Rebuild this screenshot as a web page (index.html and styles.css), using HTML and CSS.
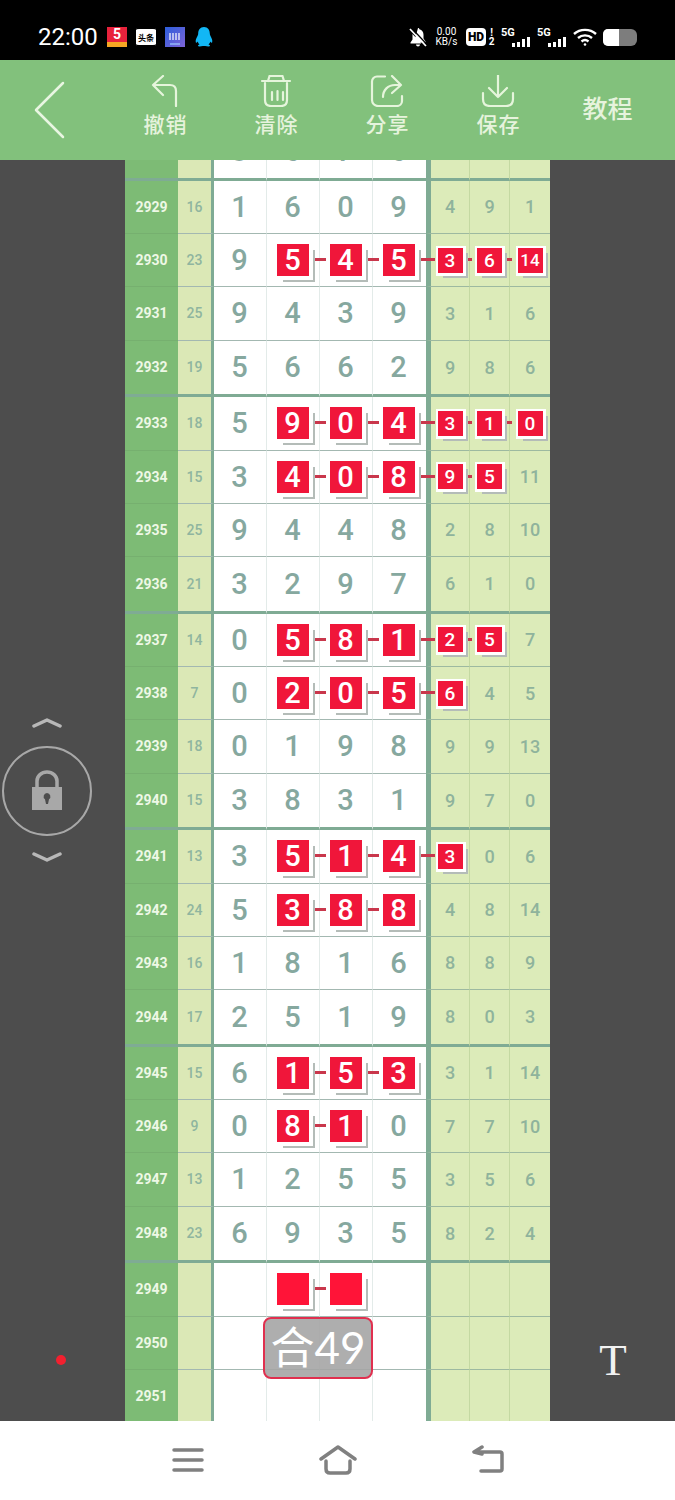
FILE: index.html
```html
<!DOCTYPE html>
<html lang="en">

<head>
    <meta charset="UTF-8">
    <meta name="viewport" content="width=device-width, initial-scale=1.0">
    <title>Number Chart</title>
    <link rel="stylesheet" href="styles.css">
</head>

<body>
    <div class="status-bar">
        <span class="time">22:00</span>
        <div class="app-icons">
            <span class="app app-red">5</span>
            <span class="app app-news">头条</span>
            <span class="app app-blue">
                <svg width="20" height="20" viewBox="0 0 20 20" fill="none" stroke="#fff" stroke-width="1.2">
                    <path d="M5 6v7M8 6v7M11 6v7M14 6v7" />
                    <path d="M5 17h10" stroke="#9fd0ff" />
                </svg>
            </span>
            <svg class="app-qq" width="18" height="20" viewBox="0 0 18 20">
                <path fill="#12b7f5" d="M9 0c4 0 5.800 3 5.800 6.500 0 1 .2 1.500.7 2.500 1.200 2.200 2.200 4.500 1.700 6.300-.3.900-1.200.3-1.900-.8-.3 1.300-1 2.200-1.800 2.900 1.200.4 1.700 1.100 1.500 1.600-.3.600-3 .5-4.800-.1-.7.100-1.700.100-2.400 0-1.800.6-4.500.7-4.800.1-.2-.5.300-1.200 1.500-1.600-.8-.7-1.500-1.600-1.800-2.900-.7 1.100-1.600 1.700-1.900.8-.5-1.800.5-4.100 1.700-6.300.5-1 .7-1.500.7-2.500C3.200 3 5 0 9 0z" />
            </svg>
        </div>
        <div class="sys-icons">
            <svg class="bell" width="20" height="20" viewBox="0 0 20 20">
                <path fill="#fff" d="M10 1c.8 0 1.300.5 1.400 1.200 2.600.6 4.100 2.800 4.100 5.500v3.800l2 3v1H6zM4.500 7l8.800 9.500H2.500v-1l2-3zM8 17.500h4c0 1-1 2-2 2s-2-1-2-2z" />
                <path stroke="#fff" stroke-width="1.800" d="M2 2l16 17" />
                <path stroke="#000" stroke-width="1.200" d="M3.500 1l16 17" />
            </svg>
            <div class="speed"><span>0.00</span><span>KB/s</span></div>
            <span class="hd">HD</span>
            <div class="sim-num"><span>!</span><span>2</span></div>
            <div class="signal"><span class="sig-label">5G</span><span class="bars"><i class="b1"></i><i class="b2"></i><i class="b3"></i><i class="b4"></i></span></div>
            <div class="signal"><span class="sig-label">5G</span><span class="bars"><i class="b1"></i><i class="b2"></i><i class="b3"></i><i class="b4"></i></span></div>
            <svg class="wifi" width="24" height="18" viewBox="0 0 24 18" fill="none" stroke="#fff" stroke-width="2.400">
                <path d="M1 6c6-5.500 16-5.500 22 0" />
                <path d="M5 10c4-3.500 10-3.500 14 0" />
                <path d="M8.500 13.500c2-1.600 5-1.600 7 0" />
                <circle cx="12" cy="16.500" r="1.300" fill="#fff" stroke="none" />
            </svg>
            <div class="battery"><span class="battery-fill"></span></div>
        </div>
    </div>

    <div class="toolbar">
        <div class="back-zone">
            <svg width="32" height="58" viewBox="0 0 32 58" fill="none" stroke="#e9f6e2" stroke-width="2.500" stroke-linecap="round" stroke-linejoin="round">
                <path d="M29 2L2 29l27 27" />
            </svg>
        </div>
        <div class="tool">
            <svg class="tool-icon" viewBox="0 0 34 32">
                <path d="M15 1L5 10l10 10M5 10h17q6 0 6 6v15" />
            </svg>
            <span>撤销</span>
        </div>
        <div class="tool">
            <svg class="tool-icon" viewBox="0 0 34 32">
                <path d="M3 6h28M9 6l1.500-5h13L25 6M6 8v17q0 6 6 6h10q6 0 6-6V8M13 17v8M18.500 16v9M24 17v8" />
            </svg>
            <span>清除</span>
        </div>
        <div class="tool">
            <svg class="tool-icon" viewBox="0 0 34 32">
                <path d="M15 1.500H7a5 5 0 0 0-5 5V25a6 6 0 0 0 6 6h19a5 5 0 0 0 5-5v-5M13 22c0-7 5-12 12-12h6M22 1l9 9-9 8" />
            </svg>
            <span>分享</span>
        </div>
        <div class="tool">
            <svg class="tool-icon" viewBox="0 0 34 32">
                <path d="M17 0v22M8 13l9 9 9-9M2 18v6q0 7 7 7h16q7 0 7-7v-6" />
            </svg>
            <span>保存</span>
        </div>
        <div class="tool tool-text">教程</div>
    </div>

    <div class="main">
        <div class="side-left">
            <svg class="chevron" width="32" height="12" viewBox="0 0 32 12" fill="none">
                <path d="M3 10l13-6 13 6" />
            </svg>
            <div class="lock-circle">
                <svg width="30" height="40" viewBox="0 0 30 40">
                    <path fill="none" stroke="#a8a8a8" stroke-width="3.500" d="M5 18V11a10 9 0 0 1 20 0v7" />
                    <path fill="#a8a8a8" fill-rule="evenodd" d="M0 17h30v23H0zM15 23a3.500 3.500 0 0 0-2 6.300L14 34h2l1-4.700A3.500 3.500 0 0 0 15 23z" />
                </svg>
            </div>
            <svg class="chevron chevron-down" width="32" height="12" viewBox="0 0 32 12" fill="none">
                <path d="M3 2l13 6 13-6" />
            </svg>
            <span class="red-dot"></span>
        </div>

        <div class="chart">
            <div class="chart-inner" id="chart"></div>
        </div>

        <div class="side-right">
            <span class="text-tool">T</span>
        </div>
    </div>

    <div class="nav-bar">
        <svg width="34" height="28" viewBox="0 0 34 28">
            <path d="M3 4h28M3 14h28M3 24h28" />
        </svg>
        <svg width="40" height="30" viewBox="0 0 40 30">
            <path d="M3 14L20 2l17 12M8 16v8q0 4 4 4h16q4 0 4-4v-8" />
        </svg>
        <svg width="34" height="30" viewBox="0 0 34 30">
            <path d="M3 7h26q2 0 2 2v15q0 2-2 2H10M11 2L3 7l8 2" />
        </svg>
    </div>

    <script src="script.js"></script>
</body>

</html>
```

FILE: styles.css
```css
* {
    box-sizing: border-box;
}

html,
body {
    margin: 0;
    padding: 0;
}

body {
    width: 675px;
    height: 1500px;
    overflow: hidden;
    font-family: 'Roboto', 'Noto Sans CJK SC', sans-serif;
    background: #4d4d4d;
}

/* status bar */
.status-bar {
    height: 60px;
    background: #000;
    color: #fff;
    display: flex;
    align-items: center;
    padding: 14px 38px 0 38px;
}

.time {
    font-size: 24px;
    width: 69px;
}

.app-icons {
    display: flex;
    align-items: center;
    gap: 9px;
}

.app {
    width: 20px;
    height: 20px;
    display: flex;
    align-items: center;
    justify-content: center;
    overflow: hidden;
}

.app-red {
    background: linear-gradient(to bottom, #e8223c 75%, #f5a623 75%);
    font-size: 14px;
    font-weight: 700;
    line-height: 14px;
    align-items: flex-start;
}

.app-news {
    background: #fff;
    color: #000;
    font-size: 8px;
    font-weight: 700;
    border-radius: 3px;
    white-space: nowrap;
    border-top: 2px solid #000;
    border-bottom: 2px solid #000;
}

.app-blue {
    background: linear-gradient(135deg, #2d5fdc, #7e63d6);
}

.app-qq {
    margin-left: 1px;
}

.sys-icons {
    margin-left: auto;
    display: flex;
    align-items: center;
}

.bell {
    margin-right: 6px;
}

.speed {
    width: 25px;
    display: flex;
    flex-direction: column;
    align-items: center;
    font-size: 10px;
    line-height: 10px;
}

.hd {
    margin-left: 7px;
    width: 20px;
    height: 18px;
    background: #fff;
    color: #000;
    border-radius: 4px;
    font-size: 12px;
    font-weight: 900;
    text-align: center;
    line-height: 18px;
}

.sim-num {
    width: 9px;
    margin-left: 1px;
    display: flex;
    flex-direction: column;
    align-items: center;
    font-size: 10px;
    font-weight: 700;
    line-height: 9px;
}

.signal {
    width: 29px;
    height: 20px;
    margin-left: 5px;
    position: relative;
}

.signal + .signal {
    margin-left: 7px;
}

.sig-label {
    font-size: 11px;
    font-weight: 700;
    line-height: 11px;
    display: block;
}

.bars {
    position: absolute;
    right: 0;
    bottom: 0;
    display: flex;
    align-items: flex-end;
    gap: 2px;
}

.bars i {
    display: block;
    width: 3px;
    background: #fff;
}

.bars .b1 {
    height: 4px;
}

.bars .b2 {
    height: 5px;
}

.bars .b3 {
    height: 8px;
}

.bars .b4 {
    height: 10px;
}

.wifi {
    margin-left: 7px;
}

.battery {
    width: 34px;
    height: 17px;
    margin-left: 6px;
    background: #7d7d7d;
    border-radius: 5px 6px 6px 5px;
    overflow: hidden;
}

.battery-fill {
    display: block;
    width: 16px;
    height: 17px;
    background: #fff;
}

/* toolbar */
.toolbar {
    height: 100px;
    background: #82c17c;
    color: #e6f3dd;
    display: flex;
    align-items: center;
    padding-right: 10px;
}

.back-zone {
    width: 110px;
    padding-left: 34px;
    display: flex;
    align-items: center;
}

.tool {
    width: 111px;
    height: 100px;
    padding-top: 15px;
    display: flex;
    flex-direction: column;
    align-items: center;
    font-size: 21px;
    font-weight: 500;
    letter-spacing: 1px;
    line-height: 28px;
}

.tool-icon {
    width: 34px;
    height: 32px;
    margin-bottom: 4px;
    margin-left: -2px;
    fill: none;
    stroke: #e6f5dc;
    stroke-width: 2.200;
    stroke-linecap: round;
    stroke-linejoin: round;
}

.tool-text {
    padding-top: 0;
    padding-right: 4px;
    justify-content: center;
    font-size: 25px;
    letter-spacing: 0;
    line-height: 88px;
}

/* main area */
.main {
    height: 1261px;
    display: flex;
    background: #4d4d4d;
}

.side-left {
    width: 125px;
    padding-top: 556px;
    display: flex;
    flex-direction: column;
}

.chevron {
    margin-left: 31px;
}

.chevron path {
    stroke: #b8b8b8;
    stroke-width: 3.500;
    stroke-linecap: round;
    stroke-linejoin: round;
}

.chevron-down {
    margin-top: 16px;
}

.lock-circle {
    width: 90px;
    height: 90px;
    margin: 18px 0 0 2px;
    padding-bottom: 2px;
    border: 2px solid #a8a8a8;
    border-radius: 50%;
    display: flex;
    align-items: center;
    justify-content: center;
}

.red-dot {
    width: 10px;
    height: 10px;
    margin: 491px 0 0 56px;
    background: #f2202f;
    border-radius: 50%;
}

.side-right {
    width: 125px;
    padding-top: 1177px;
    display: flex;
    justify-content: center;
}

.text-tool {
    font-family: 'Liberation Serif', serif;
    font-size: 45px;
    line-height: 46px;
    color: #f2f2f2;
    margin-left: 1px;
}

/* chart */
.chart {
    width: 425px;
    height: 1261px;
    overflow: hidden;
}

.chart-inner {
    margin-top: -36px;
}

.row {
    height: 53.25px;
    display: grid;
    grid-template-columns: 53px 36px 53px 53px 53px 53px 44px 40px 40px;
    position: relative;
}

.row-end {
    height: 56.75px;
}

.cell {
    position: relative;
    display: flex;
    align-items: center;
    justify-content: center;
    border-bottom: 1px solid #a3b8b1;
}

.row-end .cell {
    border-bottom: 3px solid #7fab94;
}

.issue {
    background: #7dbb75;
    color: #eef8e6;
    font-size: 14px;
    font-weight: 700;
    border-bottom-color: #76b06f;
}

.sum {
    background: #dbe8b6;
    color: #8fb59f;
    font-size: 14px;
    font-weight: 500;
    border-right: 3px solid #7fab94;
}

.num {
    background: #fff;
    color: #86a89f;
    font-size: 29px;
    font-weight: 500;
    padding-right: 1px;
    border-right: 1px solid #e3ebe9;
}

.num-last {
    border-right: none;
    padding-right: 2px;
}

.extra {
    background: #dcebb9;
    color: #8fb39c;
    font-size: 18px;
    font-weight: 500;
    border-right: 1px solid #c4d9a2;
    border-bottom-color: #9db9a0;
}

.extra-first {
    border-left: 5px solid #7fab94;
}

.extra-last {
    border-right: none;
}

.hit {
    width: 32px;
    height: 32px;
    background: #f0163a;
    color: #fff;
    font-size: 29px;
    font-weight: 500;
    display: flex;
    align-items: center;
    justify-content: center;
    box-shadow: 4px 4px 0 #fff, 6px 6px 0 #b4bcb8;
    z-index: 2;
}

.extra .hit {
    width: 25px;
    height: 25px;
    font-size: 19px;
    box-shadow: 3px 3px 0 #fff, -2px -2px 0 #fff, 3px -2px 0 #fff, -2px 3px 0 #fff, 5px 5px 0 #b4bcb8;
}

.extra .hit.small-num {
    font-size: 17px;
}

.hit-blank {
    background: #ff1438;
}

.link::after {
    content: '';
    position: absolute;
    right: -7px;
    top: 50%;
    width: 13px;
    height: 3px;
    margin-top: -2px;
    background: #c9374c;
    z-index: 1;
}

.link-cross::after {
    right: -9px;
    width: 16px;
}

.link-small::after {
    right: -3px;
    width: 6px;
}

.total-tag {
    position: absolute;
    left: 138px;
    top: 0;
    width: 110px;
    height: 62px;
    background: rgba(165, 165, 165, 0.9);
    border: 2px solid #e0304f;
    border-radius: 8px;
    color: #fff;
    font-family: 'Lato', 'Noto Sans CJK SC', sans-serif;
    font-size: 44px;
    font-weight: 400;
    line-height: 56px;
    text-align: center;
    white-space: nowrap;
    z-index: 3;
}

/* bottom nav */
.nav-bar {
    height: 79px;
    background: #fff;
    display: flex;
    align-items: center;
    justify-content: center;
    gap: 113px;
    padding-bottom: 1px;
}

.nav-bar svg {
    fill: none;
    stroke: #808080;
    stroke-width: 3.500;
    stroke-linecap: round;
    stroke-linejoin: round;
}
```

FILE: script.js
```js
// rows: issue, sum, numbers ("*" marks a highlighted number, "_" an empty cell)
const rows = [
    ['', '', '3 6 7 6 _ _ _'],
    ['2929', '16', '1 6 0 9 4 9 1'],
    ['2930', '23', '9 *5 *4 *5 *3 *6 *14'],
    ['2931', '25', '9 4 3 9 3 1 6'],
    ['2932', '19', '5 6 6 2 9 8 6'],
    ['2933', '18', '5 *9 *0 *4 *3 *1 *0'],
    ['2934', '15', '3 *4 *0 *8 *9 *5 11'],
    ['2935', '25', '9 4 4 8 2 8 10'],
    ['2936', '21', '3 2 9 7 6 1 0'],
    ['2937', '14', '0 *5 *8 *1 *2 *5 7'],
    ['2938', '7', '0 *2 *0 *5 *6 4 5'],
    ['2939', '18', '0 1 9 8 9 9 13'],
    ['2940', '15', '3 8 3 1 9 7 0'],
    ['2941', '13', '3 *5 *1 *4 *3 0 6'],
    ['2942', '24', '5 *3 *8 *8 4 8 14'],
    ['2943', '16', '1 8 1 6 8 8 9'],
    ['2944', '17', '2 5 1 9 8 0 3'],
    ['2945', '15', '6 *1 *5 *3 3 1 14'],
    ['2946', '9', '0 *8 *1 0 7 7 10'],
    ['2947', '13', '1 2 5 5 3 5 6'],
    ['2948', '23', '6 9 3 5 8 2 4'],
    ['2949', '', '_ *_ *_ _ _ _ _'],
    ['2950', '', '_ _ _ _ _ _ _'],
    ['2951', '', '_ _ _ _ _ _ _']
];

const chart = document.getElementById('chart');

const createCell = (value, index, values) => {
    const cell = document.createElement('div');
    const isHit = value.startsWith('*');
    const text = value.replace('*', '').replace('_', '');
    const nextHit = values[index + 1] && values[index + 1].startsWith('*');

    cell.className = 'cell ' + (index < 4 ? 'num' : 'extra');
    if (index === 3) cell.classList.add('num-last');
    if (index === 4) cell.classList.add('extra-first');
    if (index === 6) cell.classList.add('extra-last');

    if (isHit) {
        const box = document.createElement('div');
        box.className = 'hit';
        box.textContent = text;
        if (!text) box.classList.add('hit-blank');
        if (text.length > 1) box.classList.add('small-num');
        cell.appendChild(box);
        if (nextHit) {
            cell.classList.add('link');
            if (index === 3) cell.classList.add('link-cross');
            if (index > 3) cell.classList.add('link-small');
        }
    } else {
        cell.textContent = text;
    }
    return cell;
};

rows.forEach((item, rowIndex) => {
    const row = document.createElement('div');
    row.className = 'row';
    // every fourth row closes a group with a thick line
    if (rowIndex % 4 === 0) row.classList.add('row-end');

    row.innerHTML = `<div class="cell issue">${item[0]}</div><div class="cell sum">${item[1]}</div>`;
    const values = item[2].split(' ');
    values.forEach((value, index) => row.appendChild(createCell(value, index, values)));

    if (item[0] === '2950') {
        const tag = document.createElement('div');
        tag.className = 'total-tag';
        tag.textContent = '合49';
        row.appendChild(tag);
    }
    chart.appendChild(row);
});
```
